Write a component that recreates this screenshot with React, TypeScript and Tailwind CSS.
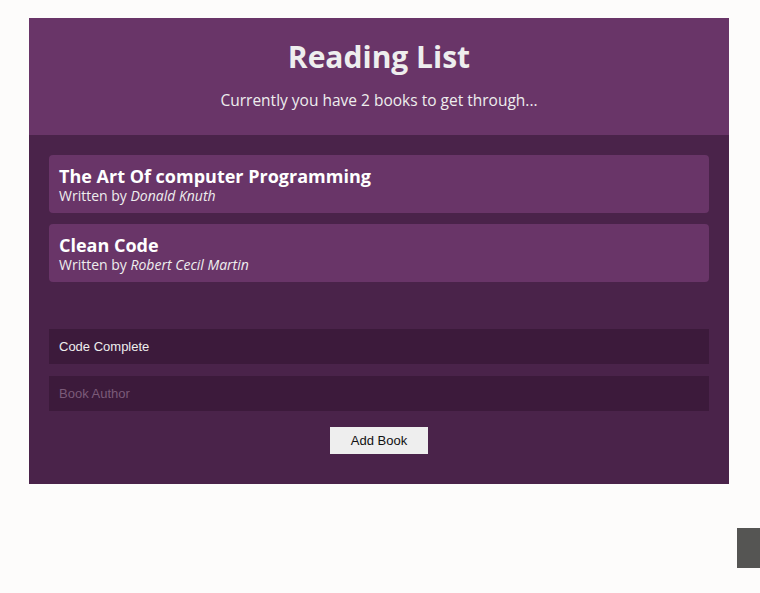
import { useState } from "react"

const books = [
  { title: "The Art Of computer Programming", author: "Donald Knuth" },
  { title: "Clean Code", author: "Robert Cecil Martin" },
]

export default function App() {
  const [title, setTitle] = useState("Code Complete")
  const [author, setAuthor] = useState("")

  return (
    <div className="relative min-h-[593px] bg-[#fdfcfb] pt-[18px]">
      <div className="ml-[29px] w-[700px] bg-[#4a234a] font-['Open_Sans',sans-serif] text-[#eee]">
        {/* Header */}
        <div className="bg-[#693568] pt-[21px] pb-[23px] text-center">
          <h1 className="text-[30px] leading-[36px] font-bold">Reading List</h1>
          <p className="mt-[13px] text-[15.5px] leading-[24px]">
            Currently you have {books.length} books to get through...
          </p>
        </div>

        {/* Book list */}
        <div className="px-5 pt-5 pb-[30px]">
          <ul className="flex flex-col gap-[11px]">
            {books.map((book) => (
              <li key={book.title} className="rounded-[4px] bg-[#693568] px-[10px] pt-[10px] pb-[8px]">
                <div className="text-[18px] leading-[22px] font-bold text-white">{book.title}</div>
                <div className="text-[14px] leading-[18px]">
                  Written by <em>{book.author}</em>
                </div>
              </li>
            ))}
          </ul>

          {/* Add form */}
          <form className="mt-[47px] flex flex-col items-center font-['Liberation_Sans',Arial,sans-serif]">
            <input
              value={title}
              onChange={(e) => setTitle(e.target.value)}
              placeholder="Book Title"
              className="h-[35px] w-full bg-[#3c1a3b] px-[10px] text-[13px] text-[#eee] outline-none placeholder:text-[#7b5a79]"
            />
            <input
              value={author}
              onChange={(e) => setAuthor(e.target.value)}
              placeholder="Book Author"
              className="mt-[12px] h-[35px] w-full bg-[#3c1a3b] px-[10px] text-[13px] text-[#eee] outline-none placeholder:text-[#7b5a79]"
            />
            <button
              type="button"
              className="mt-[16px] h-[27px] w-[98px] bg-[#eeeeee] text-[13px] text-[#111]"
            >
              Add Book
            </button>
          </form>
        </div>
      </div>

      {/* side tab */}
      <div className="absolute left-[737px] top-[528px] h-[40px] w-[23px] bg-[#555553]" />
    </div>
  )
}
